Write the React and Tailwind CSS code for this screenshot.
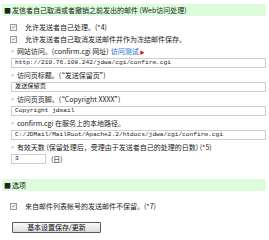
import React from 'react';

const Check = () => (
  <span className="inline-flex w-[7px] h-[7px] border border-[#9a9a9a] bg-[#f4f4f4] items-center justify-center mr-[8px] shrink-0">
    <svg viewBox="0 0 8 8" className="w-[6px] h-[6px]">
      <path d="M1.5 4 L3.3 5.8 L6.6 2" fill="none" stroke="#7a7a7a" strokeWidth="1.2" />
    </svg>
  </span>
);

const Header = ({ children }) => (
  <div className="h-[12px] bg-[#dcfcdc] flex items-center pl-[2px] text-[7px] font-normal text-[#222]">
    <span className="mr-[1px]">■</span>
    {children}
  </div>
);

const Label = ({ children }) => (
  <div className="h-[12px] flex items-center pl-[9px] whitespace-nowrap">
    <span className="text-[#999] mr-[3px] text-[6px]">»</span>
    {children}
  </div>
);

const Field = ({ value, narrow }) => (
  <div className="h-[12px] flex items-center pl-[9px]">
    <div
      className={`h-[10px] border border-[#cfcfcf] flex items-center pl-[3px] font-['Liberation_Mono','Noto_Sans_CJK_SC',monospace] text-[6.2px] whitespace-nowrap overflow-hidden ${
        narrow ? 'w-[35px]' : 'flex-1'
      }`}
    >
      {value}
    </div>
    {narrow && <span className="ml-[5px] text-[7px]">(日)</span>}
  </div>
);

export default function App() {
  return (
    <div className="w-[269px] h-[240px] bg-white text-[#222] text-[7px] leading-none font-['Noto_Sans_CJK_SC',sans-serif] pr-[3px] pl-[2px] pt-[4px] overflow-hidden">
      <Header>发信者自己取消或者撤销之前发出的邮件 (Web访问处理)</Header>
      <div className="pt-[5px]">
        <div className="h-[12px] flex items-center pl-[8px]">
          <Check />
          允许发送者自己处理。(*4)
        </div>
        <div className="h-[12px] flex items-center pl-[8px]">
          <Check />
          允许发送者自己取消发送邮件并作为冻结邮件保存。
        </div>
        <Label>
          网站访问。(confirm.cgi 网址)
          <span className="text-[#1560d8] ml-[2px]">访问测试</span>
          <span className="text-[#d01818] text-[5px] ml-[1px]">▶</span>
        </Label>
        <Field value="http://210.76.108.242/jdwa/cgi/confirm.cgi" />
        <Label>访问页标题。(“发送保留页”)</Label>
        <Field value="发送保留页" />
        <Label>访问页页脚。(“Copyright XXXX”)</Label>
        <Field value="Copyright jdmail" />
        <Label>confirm.cgi 在服务上的本地路径。</Label>
        <Field value="C:/JDMail/MailRoot/Apache2.2/htdocs/jdwa/cgi/confirm.cgi" />
        <Label>有效天数 (保留处理后，受理由于发送者自己的处理的日数) (*5)</Label>
        <Field value="3" narrow />
      </div>
      <div className="pt-[14px]">
        <Header>选项</Header>
      </div>
      <div className="h-[12px] flex items-center pl-[8px] mt-[9px]">
        <Check />
        来自邮件列表帐号的发送邮件不保留。(*7)
      </div>
      <div className="pl-[10px] mt-[10px]">
        <button className="w-[89px] h-[11px] border border-[#5a5a5a] rounded-[1px] bg-gradient-to-b from-[#fbfbfb] to-[#dcdcdc] text-[7px] text-[#111] flex items-center justify-center leading-none">
          基本设置保存/更新
        </button>
      </div>
    </div>
  );
}
